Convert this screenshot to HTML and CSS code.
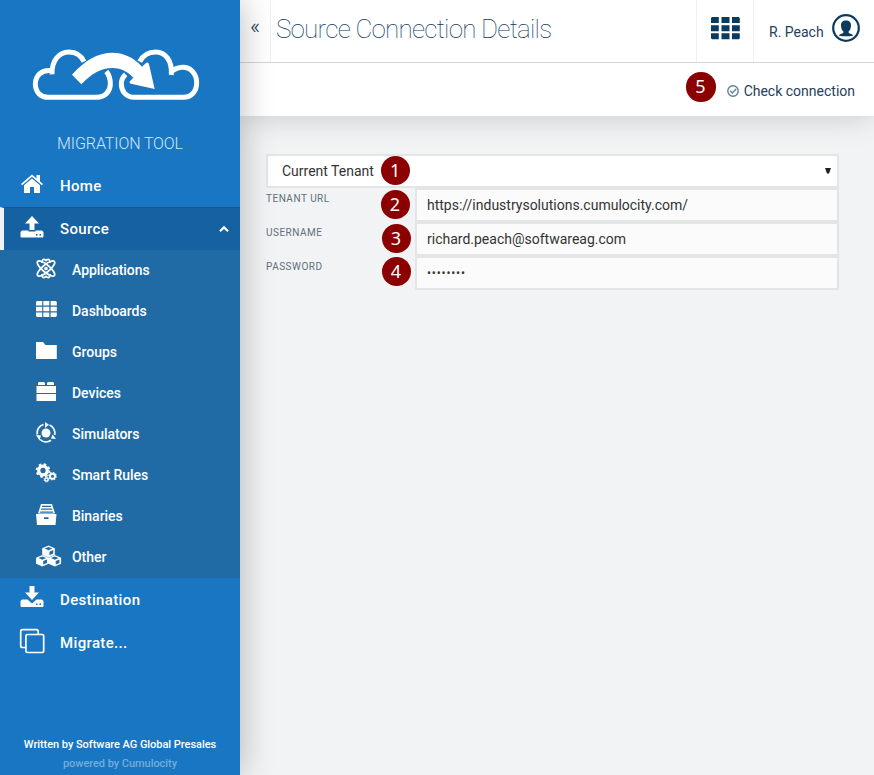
FILE: index.html
```html
<!DOCTYPE html>
<html lang="en">
<head>
<meta charset="utf-8">
<title>Migration Tool</title>
<link rel="stylesheet" href="styles.css">
</head>
<body>
<div class="app">
  <nav class="sidebar">
    <svg class="logo" viewBox="36 36 504 162">
      <g fill="none" stroke="#fff" stroke-width="15">
        <path d="M192 80C183 61 167 51 147 51C118 51 95 75 96 118M96 107C63 102 46 124 46 147C46 171 62 187 84 187H230C256 187 271 168 271 147C271 131 267 119 259 109"/>
        <path d="M359 80C369 61 385 51 407 51C436 51 457 76 454 120M452 113C463 101 475 97 489 97C513 97 530 118 530 143C530 169 514 187 490 187H343C318 187 304 169 304 147C304 135 309 125 317 118"/>
      </g>
      <path fill="#fff" d="M156 119C195 75 235 53 277 53C310 53 340 66 366 95L378 84Q385 80 387 88L404 162L333 146Q325 143 331 137L340 128C321 108 300 99 277 99C245 99 215 115 184 148Z"/>
    </svg>
    <div class="brand">MIGRATION TOOL</div>
    <a class="item"><svg class="ico" viewBox="0 0 26 26"><path d="M2 13 13 3.500 17.500 7.400V4H21v6.400l3 2.600-1.200 1.200L13 5.800 3.200 14.200Z"/><path d="M5 14.200 13 7.400l8 6.800V22h-6v-6h-4v6H5Z"/></svg><span>Home</span></a>
    <a class="item active"><svg class="ico" viewBox="0 0 26 26"><path d="M13 1 20 8.500h-4.500V15h-5V8.500H6Z"/><path fill-rule="evenodd" d="M3 15.500h6.500v1h7v-1H23l1.500 1.500v4.500q0 1-1 1h-21q-1 0-1-1V17ZM17 19v1.500h1.500V19Zm3.500 0v1.500H22V19Z"/></svg><span>Source</span><svg class="chev" viewBox="0 0 12 8"><path d="M2 6.300 6 2.400l4 3.900"/></svg></a>
    <div class="sub">
      <a class="subitem"><svg class="ico line" viewBox="0 0 26 26"><ellipse cx="12" cy="12.500" rx="3.600" ry="11" transform="rotate(50 12 12.500)"/><ellipse cx="12" cy="12.500" rx="3.600" ry="11" transform="rotate(-50 12 12.500)"/><path d="M8 7C8 2.500 10 2.800 12 4.600C14 2.800 16 2.500 16 7M8 18c0 4.500 2 4.200 4 2.400c2 1.800 4 2.100 4-2.400"/><circle cx="12" cy="12.500" r="1"/></svg><span>Applications</span></a>
      <a class="subitem"><svg class="ico" viewBox="0 0 26 26"><path d="M3 4H8.200v4.500H2V5ZM9.300 4h6v4.500h-6ZM16.600 4h5.200l1 1v3.500h-6.200ZM2 9.800h6.200v4.500H2Zm7.300 0h6v4.500h-6Zm7.300 0h6.200v4.500h-6.200ZM2 15.500h6.200V20H3l-1-1Zm7.300 0h6V20h-6Zm7.300 0h6.200V19l-1 1h-5.200Z"/></svg><span>Dashboards</span></a>
      <a class="subitem"><svg class="ico" viewBox="0 0 26 26"><path d="M2 4h7l2.500 3h11.300V21H2Z"/></svg><span>Groups</span></a>
      <a class="subitem"><svg class="ico" viewBox="0 0 26 26"><path d="M5 3h5l1 1v2H4V4Zm9 0h5l1 1v2h-7V4ZM2.500 7H22v7H2.500Zm0 8H22v7H2.500Z"/></svg><span>Devices</span></a>
      <a class="subitem"><svg class="ico" viewBox="0 0 26 26"><circle cx="12" cy="13" r="4.500"/><path class="arc" d="M9.500 4.500A8.800 8.800 0 0 0 3.200 14.500M15.500 5A8.800 8.800 0 0 1 20.700 15M17 20.300A8.800 8.800 0 0 1 6 19.500"/><path d="M11 2 15 4.700 11 8ZM2 15l5 .500-1.500 5ZM22 19l-5-.500 1.600-4Z"/></svg><span>Simulators</span></a>
      <a class="subitem"><svg class="ico" viewBox="0 0 26 26"><g class="gear"><circle cx="9" cy="9.500" r="4.300" stroke-width="3.300"/><circle cx="9" cy="9.500" r="6.400" stroke-width="1.800" stroke-dasharray="2.513 2.513"/><circle cx="18.500" cy="15.200" r="2.500" stroke-width="1.900"/><circle cx="18.500" cy="15.200" r="3.700" stroke-width="1.200" stroke-dasharray="1.450 1.450"/><circle cx="12.500" cy="18.500" r="1.600" stroke-width="1.500"/><circle cx="12.500" cy="18.500" r="2.500" stroke-width="1" stroke-dasharray="1 1"/></g></svg><span>Smart Rules</span></a>
      <a class="subitem"><svg class="ico" viewBox="0 0 26 26"><path fill-rule="evenodd" d="M7 2h11l3 9.500H4ZM8.300 3.800 7.800 5h9.600l-.500-1.200ZM7.300 6.500 6.900 7.800h11.500l-.500-1.300ZM6.400 9.500 6 10.800h13.200l-.300-1.300Z"/><path fill-rule="evenodd" d="M2 12h20.500L21.500 23H3ZM10 15.300v1.700h4.500v-1.700Z"/></svg><span>Binaries</span></a>
      <a class="subitem"><svg class="ico wide" viewBox="0 0 28 26"><path fill-rule="evenodd" d="m14.500 2.500 6.300 2.700v6.500L14.500 14.500l-6.300-2.800V5.200Zm0 1.500-3.800 1.600 3.800 1.700 3.800-1.700Zm.9 4.700v3.500l3.800-1.700V7Z"/><path fill-rule="evenodd" d="m8.300 12 6.300 2.700v6L8.300 23.500 2 20.700v-6Zm0 1.500-3.800 1.600 3.800 1.700 3.800-1.700Zm.9 4.600v3.500l3.800-1.700v-3.400ZM20.800 12l6.300 2.700v6l-6.300 2.800-6.200-2.800v-6Zm0 1.500L17 15.100l3.800 1.700 3.800-1.700Zm.9 4.600v3.500l3.800-1.700v-3.400Z"/></svg><span>Other</span></a>
    </div>
    <a class="item"><svg class="ico" viewBox="0 0 26 26"><path d="M10.500 1h5v6.500H20l-7 7.500-7-7.500h4.500Z"/><path fill-rule="evenodd" d="M3 14.500h5.500L13 18.500l4.500-4H23l1.500 1.500v5q0 1-1 1h-21q-1 0-1-1v-5ZM17 18.500V20h1.500v-1.500Zm3.500 0V20H22v-1.500Z"/></svg><span>Destination</span></a>
    <a class="item"><svg class="ico line" viewBox="0 0 26 26"><path d="M6.500 19.500H3.500Q1.700 19.500 1.700 18V3.500Q1.700 1.700 3.500 1.700h14Q19.200 1.700 19.200 3.500v2.500"/><rect x="6.900" y="6.500" width="17.800" height="18" rx="1.500"/></svg><span>Migrate...</span></a>
    <footer class="credits"><div>Written by Software AG Global Presales</div><div class="powered">powered by Cumulocity</div></footer>
  </nav>
  <main class="main">
    <header class="topbar">
      <div class="collapse">«</div>
      <h1 class="title">Source Connection Details</h1>
      <div class="switcher"><svg viewBox="0 0 29 23"><path d="M1 0h6.800v6H0V1ZM10.500 0h8v6h-8ZM21 0h6.800l1 1v5H21ZM0 8.200h7.800v6H0Zm10.500 0h8v6h-8Zm10.500 0h7.800v6H21ZM0 16.300h7.800v6H1l-1-1Zm10.500 0h8v6h-8Zm10.500 0h7.800v5l-1 1H21Z"/></svg></div>
      <div class="user"><span>R. Peach</span><svg viewBox="0 0 28 28"><circle cx="14" cy="14" r="12.800" fill="none" stroke="#0b3a5f" stroke-width="2.200"/><path d="M14 6.500c3.500 0 5.200 2 5 5.200-.1 2.700-1 4.600-2.300 5.600v1.700l3.500 1.500q.8.500.8 1.200Q14 23 7 21.700q0-.7.800-1.200l3.500-1.500v-1.700C10 16.300 9.100 14.400 9 11.700 8.800 8.500 10.500 6.500 14 6.500Z"/></svg></div>
    </header>
    <div class="actionbar">
      <span class="badge step5">5</span>
      <svg class="check" viewBox="0 0 12 12"><circle cx="6" cy="6" r="5.200"/><path d="m3.300 5.800 2.100 2.100 3.700-3.800"/></svg>
      <span class="check-label">Check connection</span>
    </div>
    <section class="form">
      <div class="select"><span>Current Tenant</span><span class="badge">1</span><svg class="caret" viewBox="0 0 6 6"><path d="M0 0h6L4 5.500H2Z"/></svg></div>
      <div class="row"><label>TENANT URL</label><span class="badge">2</span><div class="input">https://industrysolutions.cumulocity.com/</div></div>
      <div class="row"><label>USERNAME</label><span class="badge nudged">3</span><div class="input">richard.peach@softwareag.com</div></div>
      <div class="row"><label>PASSWORD</label><span class="badge nudged raised">4</span><div class="input password">••••••••</div></div>
    </section>
  </main>
</div>
</body>
</html>
```
FILE: styles.css
```css
* { box-sizing: border-box; }
body { margin: 0; font-family: Roboto, sans-serif; font-size: 14px; color: #333; }
.app { display: flex; height: 775px; overflow: hidden; background: #f1f3f5; }

.sidebar { width: 240px; flex: none; display: flex; flex-direction: column; background: #1976c2; color: #fff; position: relative; z-index: 2; box-shadow: 0 0 32px rgba(0,0,0,.28); }
.logo { width: 168px; height: 54px; margin: 47px 0 0 32px; flex: none; }
.brand { height: 63px; padding-top: 33px; line-height: 20px; text-align: center; font-size: 16px; letter-spacing: -.1px; font-weight: 300; color: #d0e6f6; }
.item { display: flex; align-items: center; height: 43px; padding-left: 19px; font-size: 15px; letter-spacing: .35px; font-weight: 500; flex: none; }
.item span { margin-left: 15px; }
.item .ico { margin-top: -3px; }
.item.active { background: #1561a1; border-left: 4px solid #f1f3f5; padding-left: 15px; border-top: 1px solid #13588f; }
.ico { width: 26px; height: 26px; fill: #fff; flex: none; }
.ico.line { fill: none; stroke: #fff; stroke-width: 1.7; }
.ico .arc { fill: none; stroke: #fff; stroke-width: 1.7; }
.gear { fill: none; stroke: #fff; }
.chev { width: 12px; height: 8px; margin-left: auto; margin-right: 10px; fill: none; stroke: #fff; stroke-width: 2.2; }
.sub { background: #206ba5; flex: none; }
.subitem { display: flex; align-items: center; height: 41px; padding: 0 0 2px 34px; font-size: 14px; letter-spacing: -.03px; font-weight: 500; }
.subitem .ico { margin-top: -2px; }
.subitem .wide { width: 28px; margin-right: -2px; }
.subitem span { margin-left: 12px; }
.credits { margin-top: auto; padding-bottom: 2px; text-align: center; font-size: 11px; letter-spacing: -.04px; line-height: 19px; font-weight: 500; }
.powered { color: #75addb; }

.main { flex: 1; min-width: 0; }
.topbar { display: flex; height: 63px; background: #fff; border-bottom: 1px solid #d3d5d7; position: relative; z-index: 1; }
.collapse { width: 31px; border-right: 1px solid #f0f0f0; text-align: center; line-height: 54px; font-size: 22px; font-weight: 300; color: #0b2a45; }
.title { margin: 0 0 0 5px; font-size: 26px; font-weight: 100; letter-spacing: -.78px; line-height: 58px; color: #0b3a5f; white-space: nowrap; }
.switcher { margin-left: auto; width: 58px; border-left: 1px solid #f0f0f0; border-right: 1px solid #f0f0f0; padding: 17px 0 0 14px; }
.switcher svg { display: block; width: 29px; height: 23px; fill: #0b3a5f; }
.user { width: 120px; display: flex; padding-left: 15px; color: #24415b; }
.user span { line-height: 64px; width: 63px; white-space: nowrap; }
.user svg { width: 28px; height: 28px; margin-top: 14px; fill: #0b3a5f; }
.actionbar { height: 53px; display: flex; align-items: center; justify-content: flex-end; padding-right: 19px; background: #fff; box-shadow: 0 0 32px rgba(0,0,0,.18); }
.check { width: 12px; height: 12px; margin: 3px 5px 0 11px; fill: none; stroke: #607f96; stroke-width: 1.4; }
.check-label { margin-top: 3px; color: #24415b; }

.badge { width: 29.5px; height: 29.5px; flex: none; border-radius: 50%; background: #8b0000; color: #fff; font: 18px/28px "Noto Sans", sans-serif; text-align: center; padding-right: 1px; }
.step5 { margin-top: -5px; }
.form { padding: 38px 35px 0 26px; }
.select { display: flex; align-items: center; height: 34px; padding: 0 6px 0 14px; background: #fff; border: 2px solid #e4e5e5; }
.select .badge { margin: -1px 0 0 7px; }
.caret { width: 6px; height: 6px; margin-left: auto; fill: #222; }
.row { display: flex; height: 34px; }
.row label { width: 114.7px; padding-top: 4px; font-size: 10px; line-height: 14px; letter-spacing: .5px; color: #61707a; }
.row .badge { margin: 1.7px 4.800px 0 0; }
.row .nudged { margin-left: 1px; margin-right: 3.800px; }
.row .raised { margin-top: .8px; }
.input { flex: 1; padding-left: 10px; line-height: 31px; background: #fbfbfb; border: 2px solid #e4e5e5; }
.password { font-size: 12px; letter-spacing: .8px; line-height: 30px; }
```
